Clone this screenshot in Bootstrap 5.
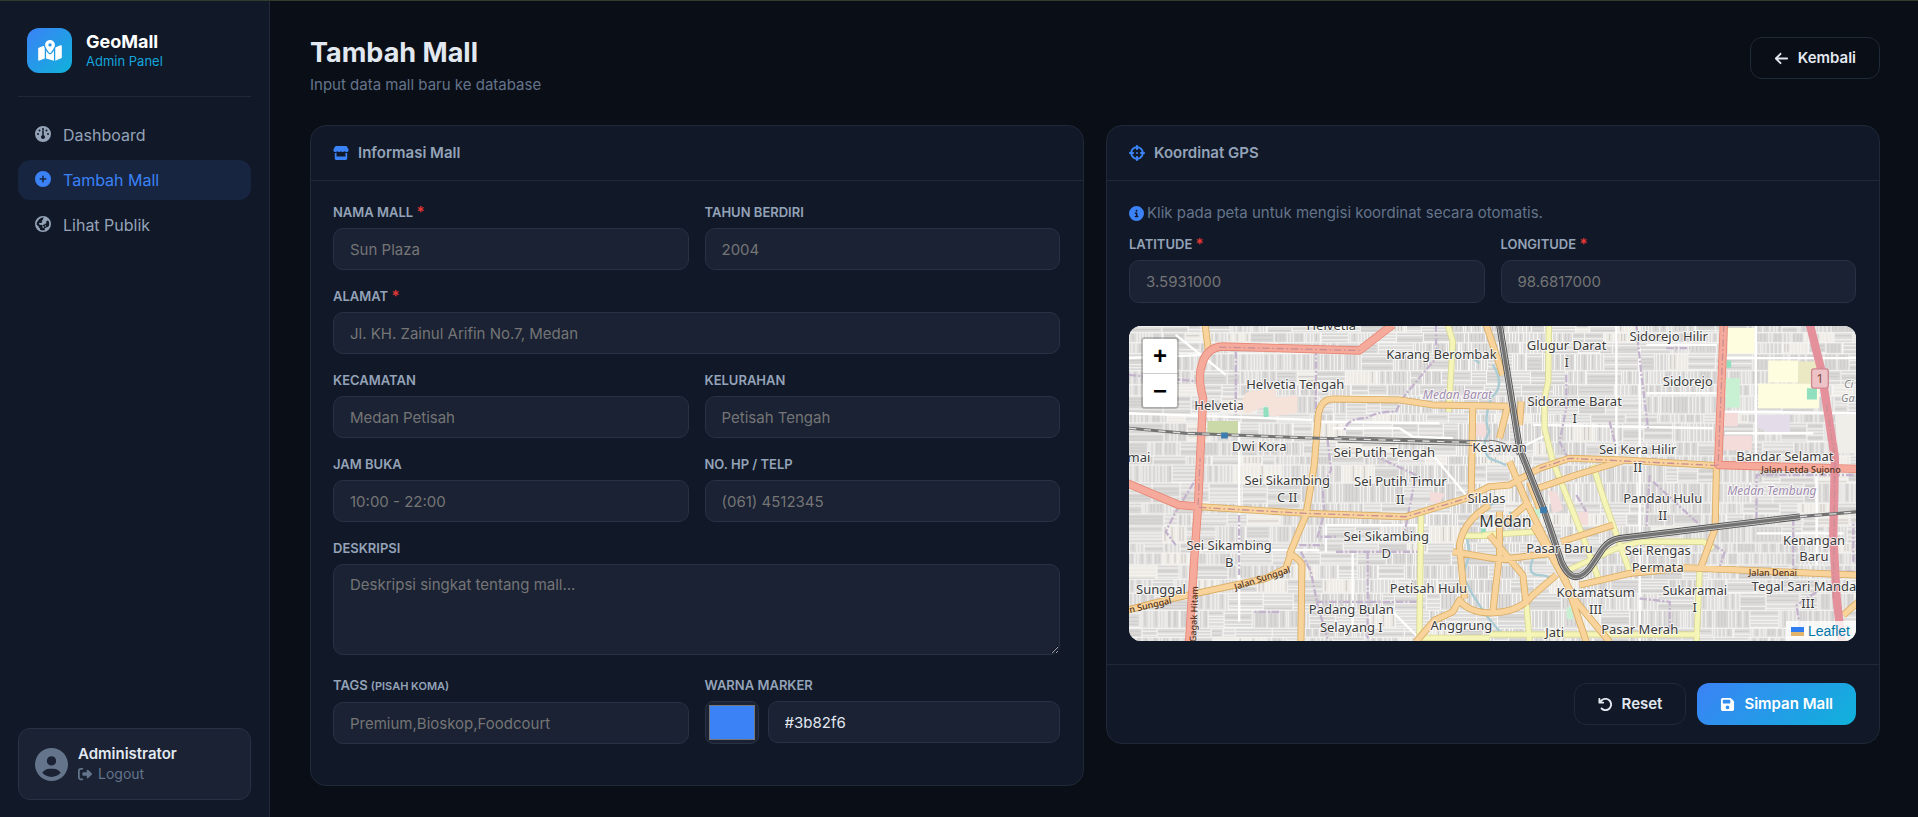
<!DOCTYPE html>
<html lang="id">
<head>
<meta charset="utf-8">
<meta name="viewport" content="width=device-width, initial-scale=1">
<title>Tambah Mall - GeoMall Admin</title>
<link href="https://cdn.jsdelivr.net/npm/bootstrap@5.3.0/dist/css/bootstrap.min.css" rel="stylesheet">
<style>
:root{--bg:#0a0e17;--panel:#111827;--field:#1a2234;--line:#1f2937;--line2:#273244;--text:#e2e8f0;--soft:#94a3b8;--dim:#64748b;--blue:#3b82f6;--cyan:#06b6d4;--grad:linear-gradient(135deg,#3b82f6,#0fb2da)}
body{background:var(--bg);color:var(--text);font-family:Inter,"Noto Sans",sans-serif;font-size:15px;line-height:22px;border-top:1px solid #303d2c;min-height:100vh}
a{text-decoration:none}
.ico{width:1em;height:1em;fill:currentColor;flex:none;display:block}
.sidebar{width:270px;flex:none;background:var(--panel);border-right:1px solid var(--line);padding:16px 18px}
.brand{padding:11px 9px 23px;border-bottom:1px solid var(--line);gap:14px}
.brand-logo{width:45px;height:45px;border-radius:12px;background:var(--grad);font-size:21px;color:#fff}
.brand-logo .ico{width:24px}
.brand-name{font-size:18px;font-weight:700;color:#fff;line-height:20px}
.brand-sub{font-size:13px;color:#15a5dc;line-height:18px}
.side-nav{margin-top:18px;gap:5px}
.side-nav .nav-link{height:40px;padding:0 17px;gap:12px;border-radius:12px;color:var(--soft);font-size:16px}
.side-nav .ico{margin-bottom:2px}
.side-nav .nav-link.active{background:#172540;color:var(--blue)}
.user-box{background:var(--field);border:1px solid var(--line2);border-radius:12px;padding:15px 16px;gap:10px;height:72px;margin-bottom:1px}
.user-box .avatar{font-size:33px;color:var(--dim)}
.user-name{font-size:15px;font-weight:600;line-height:20px}
.user-box a{font-size:14px;line-height:20px;color:var(--dim);gap:6px}
.main-area{padding:36px 38px 31px 40px;min-width:0}
.page-head{margin-bottom:29px}
.page-head h1{font-size:27px;font-weight:700;line-height:32px;margin:0 0 5px}
.page-head p{color:var(--dim);margin:0}
.cards{--bs-gutter-x:22px;--bs-gutter-y:22px}
.panel{background:var(--panel);border:1px solid var(--line);border-radius:16px;color:inherit}
.panel-head{height:55px;padding:0 22px;gap:9px;border-bottom:1px solid var(--line);font-weight:600;color:var(--soft);font-size:15px}
.panel-head .ico{color:var(--blue);font-size:16px}
.panel-body{padding:23px 23px 23px 22px}
.fields{--bs-gutter-x:16px;--bs-gutter-y:0}
.field{margin-bottom:18px}
.field label{display:block;font-size:13px;font-weight:600;line-height:16px;margin-bottom:8px;color:var(--soft)}
.field label small{font-size:11px}
.req{color:#e53935;font-size:15px;line-height:12px}
.form-control,.form-control:focus{background:var(--field);border:1px solid var(--line2);border-radius:10px;color:var(--text);font-size:15px;line-height:22px;padding:9px 16px;height:42px}
.form-control::placeholder{color:#757575}
textarea.form-control{height:91px;min-height:91px}
.field-tall{margin-bottom:22px}
.swatch{width:54px;height:43px;margin-bottom:-1px;padding:3px;background:var(--field);border:1px solid var(--line2);border-radius:8px;flex:none}
.color-row{gap:9px}
.hint{color:var(--dim);line-height:20px;gap:3px;margin-bottom:13px}
.hint .ico{color:var(--blue);font-size:15px}
.gps .panel-body{padding-top:22px}
.gps .field{margin-bottom:23px}
.gps .form-control{height:43px}
.map-box{position:relative;height:315px;border-radius:12px;overflow:hidden;background:#e4e2de}
.map-box>svg{width:100%;height:100%;display:block}
.zoom-ctl{position:absolute;left:12px;top:11px;border:2px solid rgba(0,0,0,.2);border-radius:4px;background-clip:padding-box;overflow:hidden}
.zoom-ctl button{display:block;width:34px;height:34px;border:0;padding:0;background:#fff;color:#000;font:bold 24px/32px "Liberation Sans",sans-serif}
.zoom-ctl button+button{border-top:1px solid #ccc}
.attrib{position:absolute;right:0;bottom:0;background:rgba(255,255,255,.8);padding:0 6px 0 5px;height:20px;gap:4px;font:14px/16px "Liberation Sans",sans-serif}
.attrib a{color:#0078a8}
.panel-foot{border-top:1px solid var(--line);padding:18px 23px 18px 22px;gap:11px}
.btn{font-size:15px;font-weight:600;line-height:22px;border-radius:12px;height:42px;padding:0 23px;gap:9px;display:inline-flex;align-items:center}
.btn .ico{font-size:15px}
.btn-line{color:var(--text);border:1px solid var(--line)}
.btn-line:hover{color:#fff;border-color:var(--dim)}
.btn-save{background:var(--grad);color:#fff;border:0}
.area text{font-family:"Noto Sans",sans-serif;font-size:13px;fill:#3c3c3c;text-anchor:middle;paint-order:stroke;stroke:#fff;stroke-opacity:.75;stroke-width:2px;stroke-linejoin:round}
.area .district{fill:#a18cae;font-style:italic;font-size:12px}
.area .place{fill:#888;font-style:italic;font-size:11px;text-anchor:start}
.area .city{font-size:16px}
.area .shield{fill:#7a4a40;stroke:none}
.area .street{fill:#52341c;font-size:9px;stroke:none;font-weight:500}
</style>
</head>
<body class="d-flex">
<svg class="d-none">
<symbol id="i-map" viewBox="0 0 576 512"><path d="M408 120c0 54.600-73.100 151.900-105.200 192c-7.700 9.600-22 9.600-29.600 0C241.100 271.900 168 174.600 168 120C168 53.700 221.700 0 288 0s120 53.700 120 120zm8 80.400c3.500-6.900 6.700-13.800 9.600-20.600c.5-1.200 1-2.500 1.500-3.700l116-46.400C558.900 123.400 576 135 576 152V422.800c0 9.800-6 18.600-15.100 22.300L416 503V200.400zM137.600 138.300c2.400 14.100 7.200 28.300 12.800 41.500c2.900 6.800 6.100 13.700 9.600 20.600V451.800L32.900 502.700C17.100 509 0 497.400 0 480.400V209.600c0-9.800 6-18.600 15.100-22.300l122.600-49zM327.800 332c13.900-17.400 35.700-45.700 56.200-77V504.300L192 449.400V255c20.500 31.300 42.300 59.600 56.200 77c20.500 25.600 59.100 25.600 79.600 0zM288 160a40 40 0 1 0 0-80 40 40 0 1 0 0 80z"/></symbol>
<symbol id="i-gauge" viewBox="0 0 512 512"><path fill-rule="evenodd" d="M0 256a256 256 0 1 1 512 0A256 256 0 1 1 0 256zM288 96a32 32 0 1 0-64 0a32 32 0 1 0 64 0zM256 416c35.300 0 64-28.700 64-64c0-26-16-48-40-59V152a24 24 0 1 0-48 0V293c-24 11-40 33-40 59c0 35.300 28.700 64 64 64zM176 144a32 32 0 1 0-64 0a32 32 0 1 0 64 0zM96 288a32 32 0 1 0 0-64a32 32 0 1 0 0 64zM448 256a32 32 0 1 0-64 0a32 32 0 1 0 64 0zM368 176a32 32 0 1 0 0-64a32 32 0 1 0 0 64z"/></symbol>
<symbol id="i-plus" viewBox="0 0 512 512"><path fill-rule="evenodd" d="M256 512A256 256 0 1 0 256 0a256 256 0 1 0 0 512zM232 344V280H168c-13.300 0-24-10.700-24-24s10.700-24 24-24h64V168c0-13.300 10.700-24 24-24s24 10.700 24 24v64h64c13.300 0 24 10.700 24 24s-10.700 24-24 24H280v64c0 13.300-10.700 24-24 24s-24-10.700-24-24z"/></symbol>
<symbol id="i-earth" viewBox="0 0 512 512"><path fill-rule="evenodd" d="M256 0a256 256 0 1 1 0 512A256 256 0 1 1 256 0zM90 160C60 200 48 235 52 280L120 335V365L160 400V440C210 468 280 468 330 448L300 410C330 370 380 380 440 330C468 260 455 190 420 145L380 150L350 190L370 220L340 250L310 245L290 290L260 270L245 310L200 280L160 290L120 250L145 220L200 225L235 180L215 150L260 120L250 90L290 52C210 35 140 80 90 160z"/><path d="M225 335l50-15 20 40-40 22zM320 290l34 10-10 35-34-10z"/></symbol>
<symbol id="i-store" viewBox="0 0 576 512"><path d="M547.600 103.800L490.300 13.100C485.200 5 476.100 0 466.400 0H109.600C99.900 0 90.800 5 85.700 13.100L28.300 103.800c-29.600 46.800-3.400 111.900 51.900 119.400c4 .5 8.100 .8 12.100 .8c26.100 0 49.300-11.400 65.200-29c15.900 17.600 39.100 29 65.200 29c26.100 0 49.300-11.400 65.200-29c15.900 17.600 39.100 29 65.200 29c26.200 0 49.300-11.400 65.200-29c16 17.600 39.100 29 65.200 29c4.100 0 8.100-.3 12.100-.8c55.500-7.400 81.800-72.500 52.100-119.400zM499.700 254.900c-5.300 .7-10.700 1.100-16.200 1.100c-12.400 0-24.300-1.900-35.400-5.300V384H128V250.600c-11.200 3.500-23.200 5.400-35.600 5.400c-5.500 0-11-.4-16.300-1.100c-4.100-.6-8.100-1.300-12-2.300V448c0 35.300 28.700 64 64 64H448c35.300 0 64-28.700 64-64V252.600c-4 1-8 1.800-12.300 2.300z"/></symbol>
<symbol id="i-cross" viewBox="0 0 512 512"><path fill-rule="evenodd" d="M256 0c17.700 0 32 14.300 32 32V42.400c93.700 13.900 167.700 88 181.600 181.600H480c17.700 0 32 14.300 32 32s-14.300 32-32 32H469.600c-13.900 93.700-88 167.700-181.600 181.600V480c0 17.700-14.300 32-32 32s-32-14.300-32-32V469.600C130.300 455.700 56.300 381.700 42.400 288H32c-17.700 0-32-14.300-32-32s14.300-32 32-32H42.400C56.300 130.300 130.300 56.300 224 42.400V32c0-17.700 14.300-32 32-32zM107.400 288c12.500 58.300 58.400 104.100 116.600 116.600V384c0-17.700 14.300-32 32-32s32 14.300 32 32v20.600c58.300-12.500 104.100-58.400 116.600-116.600H384c-17.700 0-32-14.300-32-32s14.300-32 32-32h20.600C392.100 165.700 346.300 119.900 288 107.400V128c0 17.700-14.300 32-32 32s-32-14.300-32-32V107.400C165.700 119.900 119.900 165.700 107.400 224H128c17.700 0 32 14.300 32 32s-14.300 32-32 32H107.400zM256 224a32 32 0 1 1 0 64 32 32 0 1 1 0-64z"/></symbol>
<symbol id="i-info" viewBox="0 0 512 512"><path fill-rule="evenodd" d="M256 512A256 256 0 1 0 256 0a256 256 0 1 0 0 512zM216 336h24V272H216c-13.300 0-24-10.700-24-24s10.700-24 24-24h48c13.300 0 24 10.700 24 24v88h8c13.300 0 24 10.700 24 24s-10.700 24-24 24H216c-13.300 0-24-10.700-24-24s10.700-24 24-24zm40-208a32 32 0 1 1 0 64 32 32 0 1 1 0-64z"/></symbol>
<symbol id="i-back" viewBox="0 0 448 512"><path d="M9.400 233.400c-12.500 12.500-12.500 32.800 0 45.300l160 160c12.500 12.500 32.800 12.500 45.300 0s12.500-32.800 0-45.300L109.200 288H416c17.700 0 32-14.300 32-32s-14.300-32-32-32H109.300L214.600 118.600c12.500-12.500 12.500-32.800 0-45.300s-32.800-12.500-45.300 0l-160 160z"/></symbol>
<symbol id="i-reset" viewBox="0 0 512 512"><path d="M125.700 160H176c17.700 0 32 14.300 32 32s-14.300 32-32 32H48c-17.700 0-32-14.300-32-32V64c0-17.700 14.300-32 32-32s32 14.300 32 32v51.200L97.600 97.600c87.500-87.500 229.300-87.500 316.800 0s87.500 229.300 0 316.800s-229.300 87.500-316.800 0c-12.500-12.500-12.500-32.800 0-45.300s32.800-12.500 45.300 0c62.500 62.500 163.800 62.500 226.300 0s62.500-163.800 0-226.300s-163.800-62.500-226.300 0L125.700 160z"/></symbol>
<symbol id="i-save" viewBox="0 0 448 512"><path fill-rule="evenodd" d="M64 32C28.700 32 0 60.700 0 96V416c0 35.300 28.700 64 64 64H384c35.300 0 64-28.700 64-64V173.300c0-17-6.700-33.300-18.700-45.300L352 50.700C340 38.700 323.700 32 306.700 32H64zm0 96c0-17.700 14.300-32 32-32H288c17.700 0 32 14.300 32 32v64c0 17.700-14.300 32-32 32H96c-17.700 0-32-14.300-32-32V128zM224 288a64 64 0 1 1 0 128 64 64 0 1 1 0-128z"/></symbol>
<symbol id="i-user" viewBox="0 0 512 512"><path fill-rule="evenodd" d="M399 384.200C376.900 345.800 335.400 320 288 320H224c-47.400 0-88.900 25.800-111 64.200c35.200 39.200 86.200 63.800 143 63.800s107.800-24.700 143-63.800zM0 256a256 256 0 1 1 512 0A256 256 0 1 1 0 256zm256 16a72 72 0 1 0 0-144 72 72 0 1 0 0 144z"/></symbol>
<symbol id="i-out" viewBox="0 0 512 512"><path d="M377.900 105.900L500.700 228.700c7.200 7.200 11.300 17.100 11.300 27.300s-4.100 20.100-11.300 27.300L377.900 406.100c-6.400 6.400-15 9.900-24 9.900c-18.700 0-33.900-15.200-33.900-33.900V320H192c-17.700 0-32-14.300-32-32V224c0-17.700 14.300-32 32-32H320V129.900c0-18.700 15.200-33.900 33.900-33.900c9 0 17.600 3.600 24 9.900zM160 96H96c-17.700 0-32 14.300-32 32V384c0 17.700 14.300 32 32 32h64c17.700 0 32 14.300 32 32s-14.300 32-32 32H96c-53 0-96-43-96-96V128C0 75 43 32 96 32h64c17.700 0 32 14.300 32 32s-14.300 32-32 32z"/></symbol>
</svg>

<aside class="sidebar d-flex flex-column">
  <div class="brand d-flex align-items-center">
    <div class="brand-logo d-flex align-items-center justify-content-center"><svg class="ico"><use href="#i-map"/></svg></div>
    <div>
      <div class="brand-name">GeoMall</div>
      <div class="brand-sub">Admin Panel</div>
    </div>
  </div>
  <nav class="side-nav nav flex-column">
    <a href="#" class="nav-link d-flex align-items-center"><svg class="ico"><use href="#i-gauge"/></svg>Dashboard</a>
    <a href="#" class="nav-link active d-flex align-items-center" aria-current="page"><svg class="ico"><use href="#i-plus"/></svg>Tambah Mall</a>
    <a href="#" class="nav-link d-flex align-items-center"><svg class="ico"><use href="#i-earth"/></svg>Lihat Publik</a>
  </nav>
  <div class="user-box d-flex align-items-center mt-auto">
    <svg class="ico avatar"><use href="#i-user"/></svg>
    <div>
      <div class="user-name">Administrator</div>
      <a href="#" class="d-flex align-items-center"><svg class="ico"><use href="#i-out"/></svg>Logout</a>
    </div>
  </div>
</aside>

<main class="main-area flex-grow-1">
  <header class="page-head d-flex justify-content-between align-items-start">
    <div>
      <h1>Tambah Mall</h1>
      <p>Input data mall baru ke database</p>
    </div>
    <a href="#" class="btn btn-line"><svg class="ico"><use href="#i-back"/></svg>Kembali</a>
  </header>

  <form>
  <div class="row cards align-items-start">
    <div class="col-lg-6">
      <section class="panel">
        <div class="panel-head d-flex align-items-center"><svg class="ico"><use href="#i-store"/></svg>Informasi Mall</div>
        <div class="panel-body">
          <div class="row fields">
            <div class="col-6 field"><label for="nama">NAMA MALL <span class="req">*</span></label><input id="nama" class="form-control" placeholder="Sun Plaza"></div>
            <div class="col-6 field"><label for="tahun">TAHUN BERDIRI</label><input id="tahun" class="form-control" placeholder="2004"></div>
            <div class="col-12 field"><label for="alamat">ALAMAT <span class="req">*</span></label><input id="alamat" class="form-control" placeholder="Jl. KH. Zainul Arifin No.7, Medan"></div>
            <div class="col-6 field"><label for="kec">KECAMATAN</label><input id="kec" class="form-control" placeholder="Medan Petisah"></div>
            <div class="col-6 field"><label for="kel">KELURAHAN</label><input id="kel" class="form-control" placeholder="Petisah Tengah"></div>
            <div class="col-6 field"><label for="jam">JAM BUKA</label><input id="jam" class="form-control" placeholder="10:00 - 22:00"></div>
            <div class="col-6 field"><label for="telp">NO. HP / TELP</label><input id="telp" class="form-control" placeholder="(061) 4512345"></div>
            <div class="col-12 field field-tall"><label for="desk">DESKRIPSI</label><textarea id="desk" class="form-control" placeholder="Deskripsi singkat tentang mall..."></textarea></div>
            <div class="col-6 field"><label for="tags">TAGS <small>(PISAH KOMA)</small></label><input id="tags" class="form-control" placeholder="Premium,Bioskop,Foodcourt"></div>
            <div class="col-6 field"><label for="warna">WARNA MARKER</label>
              <div class="d-flex color-row"><input id="warna" type="color" class="swatch" value="#3b82f6"><input class="form-control" value="#3b82f6" aria-label="Kode warna"></div>
            </div>
          </div>
        </div>
      </section>
    </div>

    <div class="col-lg-6">
      <section class="panel gps">
        <div class="panel-head d-flex align-items-center"><svg class="ico"><use href="#i-cross"/></svg>Koordinat GPS</div>
        <div class="panel-body">
          <div class="hint d-flex align-items-center"><svg class="ico"><use href="#i-info"/></svg>Klik pada peta untuk mengisi koordinat secara otomatis.</div>
          <div class="row fields">
            <div class="col-6 field"><label for="lat">LATITUDE <span class="req">*</span></label><input id="lat" class="form-control" placeholder="3.5931000"></div>
            <div class="col-6 field"><label for="lng">LONGITUDE <span class="req">*</span></label><input id="lng" class="form-control" placeholder="98.6817000"></div>
          </div>
          <div class="map-box">
            <svg class="area" viewBox="0 0 726 315" preserveAspectRatio="xMidYMid slice" role="img" aria-label="Peta Medan">
              <g id="blocks"></g>
              <g transform="translate(-10 -11) scale(.33333)" fill="none" stroke-linejoin="round">
                <g stroke="none">
                  <path fill="#fffde0" d="M1823 40h82v76h-82zM1945 137h90v66h-90zM1915 206h182v74H1915z"/>
                  <path fill="#ebe9c4" d="M2035 140h62v66h-62z"/>
                  <path fill="#c8f1d3" d="M1818 190h42v88h-42zM1237 580h24v32h-24zM1342 876h18v36h-18z"/>
                  <path fill="#90dfbf" d="M2061 220h30v34h-30zM1820 137h14v22h-14zM433 277h15v30h-15zM1085 640h14v18h-14z"/>
                  <path fill="#e4dce8" d="M1912 300h98v56l-55 2-43-22z"/>
                  <path fill="#f3dcd9" d="M1812 290h42v44h-42zM1812 362h84v44h-84zM1285 525l30 10 15 50-30 10zM1375 590h30v40h-30zM1070 325h30v40h-30zM932 530l45 6-20 34-25-10z"/>
                  <path fill="#f5e2d9" d="M395 228l72-5 5 25 62-8v55l-80 10-10-35-55 25-30-5 20-55z"/>
                  <path fill="#cbd8a7" d="M265 318h95v40h-95z"/>
                  <path fill="#f0eee8" d="M2145 300h70v115h-60z"/>
                </g>
                <g stroke="#fff" stroke-width="7">
                  <path d="M1815 130H2215M1815 290L2215 295M1908 30V440M1815 355H2080M30 295L580 315M30 130l230-10M170 60l150 120M600 320l360 5M600 705l-370 0M360 320v600M620 710l0-80 300 0M1240 330l540 10M1580 235h210M1580 90h210M1490 30v400M640 340h200l40 25 120 5M940 420l100 120M820 890l80 80M1910 655h260M2090 450v300M1560 100v880M700 710v240M1200 400l80-40"/>
                </g>
                <g stroke="#a9cbd4" stroke-width="7">
                  <path d="M1060 130l20 15M1120 150Q1160 210 1115 250Q1090 320 1110 350Q1080 400 1110 430L1160 450M1170 590Q1200 620 1170 640M1130 560Q1060 600 1040 650L1050 720 1030 780 1060 840 1100 900 1150 960M1240 730Q1220 780 1260 780T1290 810"/>
                </g>
                <g stroke="#c4b3cd" stroke-width="7" stroke-dasharray="22 6 6 6">
                  <path d="M30 180l210 20M350 110V300M590 100v200M950 30v100q-60 70-100 120l-20 40q-60 0-90 20-60 0-65 40M625 375l10 90-25 50 5 80-20 70h60M245 470L170 590l-30 60 30 40M545 710l30 60 20 100 30 100M650 710h250M745 710v260M590 860h310M540 690h70M760 420l130 60-40 200M1340 180v100l-20 100 30 60M1550 30l15 150 20 160M1470 320l20 80M1370 540l30 50M1590 480l-10 160M1600 500l140 130M2200 480h-290v150M2020 610v160h190M2040 940l-10-70 60-40M1780 690l35 20-20 60M1560 850l90 10v110M1640 100h70M360 600v180M480 890l-80 0M2200 740l0-120"/>
                </g>
                <g stroke="#d9d796" stroke-width="19"><path id="yl" d="M985 30L1000 80 988 290M905 600L900 960M1030 662H1140M1288 30L1286 200 1275 250 1275 340 1300 440 1380 640 1440 800M1420 450L1455 560 1530 770M1345 765L1490 700 1560 680 1750 680 1780 700M1740 760L1730 980M1110 958H1740M1220 860L1230 980M1090 660L1250 650M900 968H1110"/></g>
                <g stroke="#f5f5b7" stroke-width="14"><use href="#yl"/></g>
                <g stroke="#d9ad62" stroke-width="21"><path id="or" d="M258 30L268 110M240 575L560 595 860 605 1040 550 1110 515 1170 510 1260 460 1350 430 1510 435 1795 452M545 980L548 750Q545 735 512 715L560 600 585 450 597 300Q605 253 640 252L840 255 940 270 1165 274M1060 275L1055 550M1110 570Q1030 620 1020 690L1035 850M890 980L945 915 1000 890 1020 855Q1050 895 1120 893Q1200 890 1240 840L1310 780M25 885L160 850 440 790 500 760 515 715M1000 710L1140 733 1295 715M1100 30L1150 180M1165 270L1140 370M1205 260L1200 330M1240 525L1370 480 1510 437M1790 450L1786 640 1740 765M1380 810L1530 775 1700 758 2215 780M1170 440L1220 560 1300 720 1340 800 1400 980M1240 630L1300 730 1370 860 1470 980M1140 590L1140 720 1120 890M1325 680L1480 630M1160 620L1230 560M1110 660L1210 780 1220 870M2170 900L2215 860M1230 500l30 80"/></g>
                <g stroke="#f9d39c" stroke-width="16"><use href="#or"/></g>
                <g stroke="#e78776" stroke-width="25"><path id="rd" d="M210 980L225 740 237 570 243 430 252 250Q235 190 248 150Q262 98 310 95L720 107 820 30M25 505L180 570 240 575M1812 30L1795 450 2215 462"/></g>
                <g stroke="#f5aa9b" stroke-width="20"><use href="#rd"/></g>
                <path stroke="#e5919c" stroke-width="25" d="M2070 30L2105 170 2120 270 2145 430 2140 660 2150 850 2165 980"/>
                <path stroke="#c98f93" stroke-width="4" stroke-dasharray="22 8 5 8" d="M300 97L720 107M240 577L560 595 860 605 1040 550M1812 30L1795 450M2120 270L2145 430 2140 850M237 570L243 430M1260 460L1350 430 1795 452"/>
                <g stroke="#737373"><path stroke-width="9" d="M30 340L200 355 600 370 1050 382"/><path stroke-width="3" d="M655 365L1110 378M655 382L1060 392M1110 376Q1170 380 1195 420"/><path stroke-width="20" stroke="#4c4c4c" d="M1140 30L1200 400 1275 590 1325 740Q1345 785 1370 785Q1395 785 1420 745L1450 700Q1470 675 1500 670L2040 605"/><path stroke-width="15" stroke="#c4c4c4" d="M1140 30L1200 400 1275 590 1325 740Q1345 785 1370 785Q1395 785 1420 745L1450 700Q1470 675 1500 670L2040 605"/><path stroke-width="10" d="M1140 30L1200 400 1275 590 1325 740Q1345 785 1370 785Q1395 785 1420 745L1450 700Q1470 675 1500 670L2040 605 2215 590"/></g>
                <path stroke="#ddd" stroke-width="4" stroke-dasharray="22 22" d="M30 340L200 355 600 370 1050 382M2040 605L2215 590"/>
                <path fill="#3c7cae" d="M306 353h20v18h-20zM1262 576h20v18h-20z"/>
                <rect x="2075" y="162" width="50" height="58" rx="7" fill="#eec3c8" stroke="#cf8690" stroke-width="4"/>
              </g>
              <text x="202" y="4">Helvetia</text>
              <text x="312" y="33">Karang Berombak</text>
              <text x="166" y="63">Helvetia Tengah</text>
              <text x="90" y="84">Helvetia</text>
              <text class="district" x="328" y="73">Medan Barat</text>
              <text x="130" y="125">Dwi Kora</text>
              <text x="10" y="136">mai</text>
              <text x="255" y="131">Sei Putih Tengah</text>
              <text x="370" y="126">Kesawan</text>
              <text x="158" y="159">Sei Sikambing</text><text x="158" y="176">C II</text>
              <text x="271" y="160">Sei Putih Timur</text><text x="271" y="178">II</text>
              <text x="357" y="177">Silalas</text>
              <text class="city" x="376" y="201">Medan</text>
              <text x="100" y="224">Sei Sikambing</text><text x="100" y="241">B</text>
              <text x="257" y="215">Sei Sikambing</text><text x="257" y="232">D</text>
              <text x="32" y="268">Sunggal</text>
              <text x="299" y="267">Petisah Hulu</text>
              <text x="222" y="288">Padang Bulan</text><text x="222" y="306">Selayang I</text>
              <text x="332" y="304">Anggrung</text>
              <text x="437" y="24">Glugur Darat</text><text x="437" y="41">I</text>
              <text x="539" y="15">Sidorejo Hilir</text>
              <text x="558" y="60">Sidorejo</text>
              <text x="445" y="80">Sidorame Barat</text><text x="445" y="97">I</text>
              <text x="508" y="128">Sei Kera Hilir</text><text x="508" y="146">II</text>
              <text x="655" y="135">Bandar Selamat</text>
              <text x="533" y="177">Pandau Hulu</text><text x="533" y="194">II</text>
              <text class="district" x="642" y="169">Medan Tembung</text>
              <text x="430" y="227">Pasar Baru</text>
              <text x="528" y="229">Sei Rengas</text><text x="528" y="246">Permata</text>
              <text x="684" y="219">Kenangan</text><text x="684" y="235">Baru</text>
              <text x="466" y="271">Kotamatsum</text><text x="466" y="288">III</text>
              <text x="565" y="269">Sukaramai</text><text x="565" y="286">I</text>
              <text x="674" y="265">Tegal Sari Manda</text><text x="678" y="282">III</text>
              <text x="510" y="308">Pasar Merah</text>
              <text x="425" y="311">Jati</text>
              <text class="shield" x="690" y="57">1</text>
              <text x="714" y="62" class="place">Ci</text><text x="711" y="76" class="place">Ga</text>
              <text class="street" x="671" y="147">Jalan Letda Sujono</text>
              <text class="street" x="643" y="250">Jalan Denai</text>
              <text class="street" transform="translate(134 255) rotate(-18)">Jalan Sunggal</text>
              <text class="street" transform="translate(22 282) rotate(-13)">n Sunggal</text>
              <text class="street" transform="translate(68 288) rotate(-88)">Gagak Hitam</text>
            </svg>
            <div class="zoom-ctl"><button type="button" aria-label="Perbesar">+</button><button type="button" aria-label="Perkecil">−</button></div>
            <div class="attrib d-flex align-items-center"><svg width="13" height="9"><path fill="#2f7df0" d="M0 0h13v5H0z"/><path fill="#e0b46a" d="M0 5h13v4H0z"/></svg><a href="#">Leaflet</a></div>
          </div>
        </div>
        <div class="panel-foot d-flex justify-content-end">
          <button type="reset" class="btn btn-line"><svg class="ico"><use href="#i-reset"/></svg>Reset</button>
          <button type="submit" class="btn btn-save"><svg class="ico"><use href="#i-save"/></svg>Simpan Mall</button>
        </div>
      </section>
    </div>
  </div>
  </form>
</main>
<script src="https://cdn.jsdelivr.net/npm/bootstrap@5.3.0/dist/js/bootstrap.bundle.min.js"></script>
<script>
// City blocks under the main roads: hatched rows of houses split by white lanes.
let seed = 7;
const rnd = () => (seed = (seed * 16807) % 2147483647) / 2147483647;
let fills = '', lanes = '', dark = '';
for (let y = -2; y < 315;) {
  const h = 9 + Math.floor(rnd() * 12);
  for (let x = -2; x < 726;) {
    const w = 12 + Math.floor(rnd() * 26);
    const tone = rnd() < .1 ? '#eeebe4' : rnd() < .5 ? '#dedddb' : '#d9d8d6';
    fills += `<rect x="${x}" y="${y}" width="${w}" height="${h}" fill="${tone}"/>`;
    if (rnd() < .55) for (let i = 2; i < w; i += 3 + Math.floor(rnd() * 2)) {
      (rnd() < .6) ? lanes += `M${x + i} ${y}v${h}` : dark += `M${x + i} ${y + 1}v${h - 3}`;
    } else for (let i = 3; i < h; i += 3 + Math.floor(rnd() * 2)) {
      (rnd() < .6) ? lanes += `M${x} ${y + i}h${w}` : dark += `M${x + 1} ${y + i}h${w - 3}`;
    }
    lanes += `M${x} ${y}v${h}M${x} ${y}h${w}`;
    x += w;
  }
  y += h;
}
document.getElementById('blocks').innerHTML = fills +
  `<path d="${dark}" stroke="#cbc9ca" fill="none"/><path d="${lanes}" stroke="#f6f6f5" stroke-width="1" fill="none"/>`;
</script>
</body>
</html>
